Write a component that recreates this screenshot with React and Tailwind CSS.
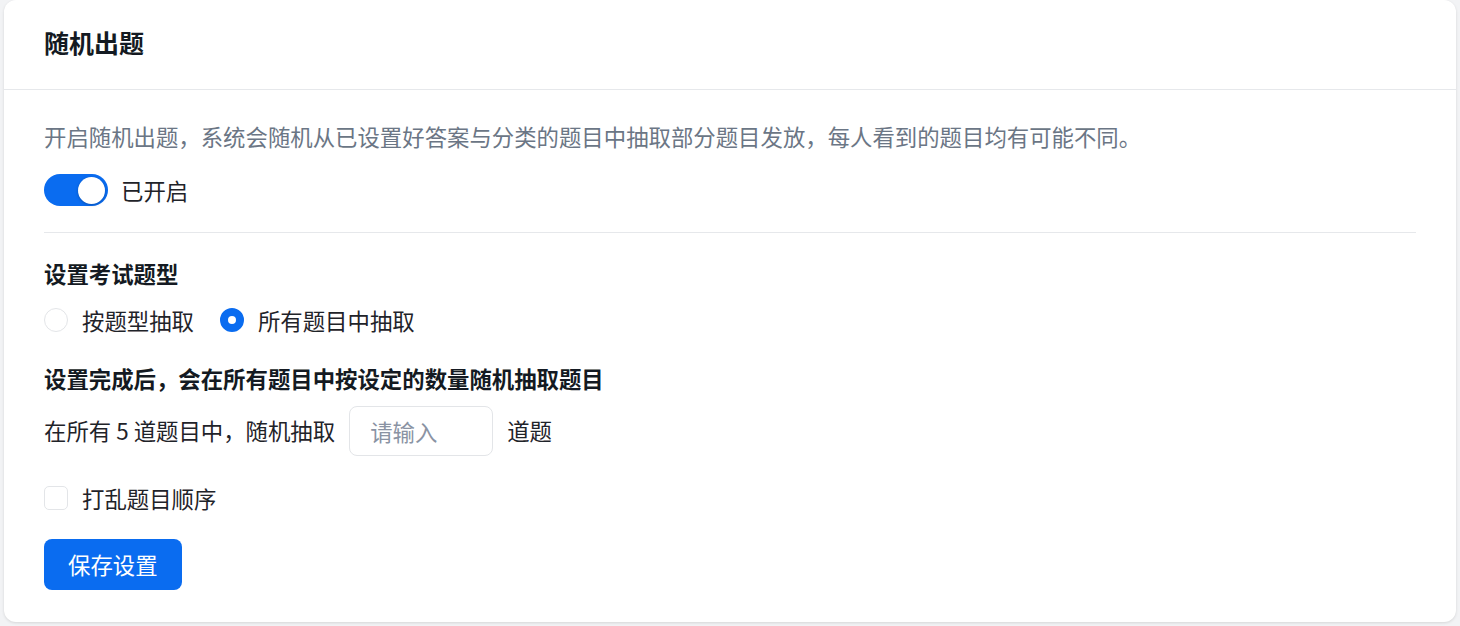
import { useState } from 'react'

const font = { fontFamily: '"Noto Sans CJK SC", "Noto Sans", sans-serif' }

const Radio = ({ checked, label, onClick }) => (
  <button onClick={onClick} className="flex items-center gap-[14px] h-8">
    {checked ? (
      <span className="w-6 h-6 rounded-full border-[8px] border-[#0a6cf0] bg-white" />
    ) : (
      <span className="w-6 h-6 rounded-full border border-[#e3e5e8] bg-white" />
    )}
    <span className="text-[22.4px] leading-8 text-[#1f2329]">{label}</span>
  </button>
)

export default function App() {
  const [enabled, setEnabled] = useState(true)
  const [mode, setMode] = useState('all')
  const [shuffle, setShuffle] = useState(false)
  const [count, setCount] = useState('')

  return (
    <div className="min-h-screen bg-[#f2f3f5] px-1 pb-1" style={font}>
      <div className="bg-white rounded-xl shadow-[0_1px_3px_rgba(0,0,0,0.12)] h-[622px] flex flex-col">
        {/* Header */}
        <div className="h-[90px] px-10 flex items-center border-b border-[#e6e8eb]">
          <h1 className="text-[25px] font-bold text-[#141a22] -mt-1">随机出题</h1>
        </div>

        {/* Body */}
        <div className="px-10 pt-[30px]">
          <p className="text-[22.4px] leading-8 text-[#6b7685]">
            开启随机出题，系统会随机从已设置好答案与分类的题目中抽取部分题目发放，每人看到的题目均有可能不同。
          </p>

          <div className="mt-[22px] flex items-center gap-[13px] h-8">
            <button
              onClick={() => setEnabled(!enabled)}
              className={`w-16 h-8 rounded-full p-[3px] flex items-center ${enabled ? 'bg-[#0a6cf0] justify-end' : 'bg-[#d5d9de] justify-start'}`}
            >
              <span className="w-[27px] h-[27px] rounded-full bg-white shadow-[0_1px_3px_rgba(0,0,0,0.25)]" />
            </button>
            <span className="text-[22.4px] leading-8 text-[#1f2329]">{enabled ? '已开启' : '已关闭'}</span>
          </div>

          <div className="mt-[26px] h-px bg-[#e6e8eb]" />

          <h2 className="mt-[24px] text-[22.4px] leading-8 font-bold text-[#141a22]">设置考试题型</h2>
          <div className="mt-[15px] flex items-center gap-[26px]">
            <Radio checked={mode === 'type'} label="按题型抽取" onClick={() => setMode('type')} />
            <Radio checked={mode === 'all'} label="所有题目中抽取" onClick={() => setMode('all')} />
          </div>

          <h2 className="mt-[26px] text-[22.4px] leading-8 font-bold text-[#141a22]">
            设置完成后，会在所有题目中按设定的数量随机抽取题目
          </h2>
          <div className="mt-[12px] flex items-center gap-[14px] text-[22.4px] text-[#1f2329]">
            <span className="whitespace-pre">在所有 5 道题目中，随机抽取</span>
            <input
              value={count}
              onChange={(e) => setCount(e.target.value)}
              placeholder="请输入"
              className="w-[144px] h-[50px] rounded-lg border border-[#e3e5e8] px-5 text-[22.4px] outline-none placeholder:text-[#8a93a3]"
            />
            <span>道题</span>
          </div>

          <button onClick={() => setShuffle(!shuffle)} className="mt-[26px] flex items-center gap-[14px] h-8">
            <span className={`w-6 h-6 rounded-[5px] border flex items-center justify-center ${shuffle ? 'bg-[#0a6cf0] border-[#0a6cf0]' : 'bg-white border-[#e3e5e8]'}`}>
              {shuffle && (
                <svg width="14" height="14" viewBox="0 0 14 14" fill="none">
                  <path d="M2.5 7.5l3 3 6-7" stroke="white" strokeWidth="2" strokeLinecap="round" strokeLinejoin="round" />
                </svg>
              )}
            </span>
            <span className="text-[22.4px] leading-8 text-[#1f2329]">打乱题目顺序</span>
          </button>

          <button className="mt-[25px] block h-[51px] px-6 rounded-lg bg-[#0a6cf0] text-white text-[22.4px]">
            保存设置
          </button>
        </div>
      </div>
    </div>
  )
}
